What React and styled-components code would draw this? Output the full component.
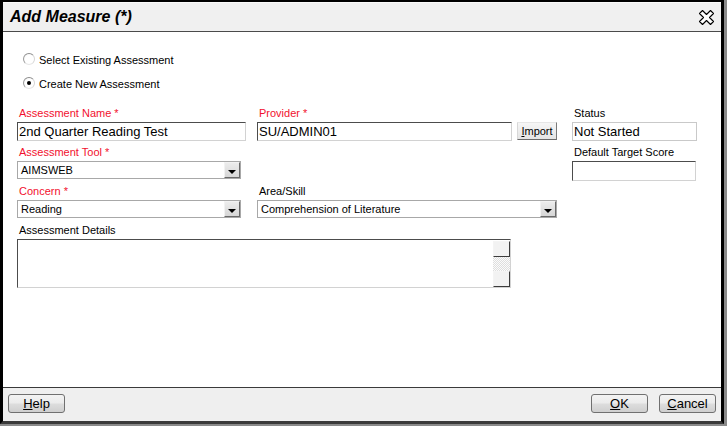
import React from 'react'
import styled, { createGlobalStyle } from 'styled-components'

const GlobalStyle = createGlobalStyle`
  html, body {
    margin: 0;
    padding: 0;
    background: #8a8a8a;
    width: 727px;
    height: 426px;
    overflow: hidden;
  }
  body {
    font-family: "Liberation Sans", Arial, sans-serif;
    color: #000;
  }
`

const Dialog = styled.div`
  width: 724px;
  height: 424px;
  box-sizing: border-box;
  border: 3px solid #000;
  border-bottom-color: #3a3a3a;
  display: flex;
  flex-direction: column;
  background: #fff;
`

const TitleBar = styled.div`
  height: 28px;
  display: flex;
  align-items: center;
  justify-content: space-between;
  padding: 0 6px 0 7px;
  background: #f0f0f0;
  border-top: 1px solid #fafafa;
  border-bottom: 1px solid #4a4a4a;
  box-sizing: content-box;
  margin-top: -1px;
`

const Title = styled.h1`
  margin: 0;
  font-size: 16px;
  font-weight: bold;
  font-style: italic;
  letter-spacing: 0;
`

const Body = styled.div`
  flex: 1;
  padding: 16px 0 0 14px;
`

const RadioRow = styled.label`
  height: 24px;
  display: flex;
  align-items: center;
  gap: 4px;
  padding-left: 6px;
  font-size: 11px;
`

const RadioDot = styled.span`
  width: 10px;
  height: 10px;
  border-radius: 50%;
  border: 1px solid;
  border-color: #8c8c8c #d6d6d6 #e6e6e6 #9c9c9c;
  background: radial-gradient(circle at 60% 60%, #fff 0 55%, #ececec 100%);
  display: flex;
  align-items: center;
  justify-content: center;
  margin-top: -3px;

  &::after {
    content: '';
    width: 4px;
    height: 4px;
    border-radius: 50%;
    background: ${({ checked }) => (checked ? '#000' : 'transparent')};
  }
`

const FormGrid = styled.div`
  margin-top: 11px;
  display: grid;
  grid-template-columns: 240px 315px 125px;
  grid-template-rows: 39px 39px 39px auto;
`

const Field = styled.div`
  display: flex;
  flex-direction: column;
  align-items: flex-start;
  grid-column: ${({ span }) => span || 'auto'};
`

const Label = styled.div`
  font-size: 11px;
  line-height: 13px;
  height: 13px;
  margin-bottom: 2px;
  padding-left: 2px;
  color: ${({ required }) => (required ? '#f2102e' : '#000')};
  white-space: nowrap;
`

const TextBox = styled.div`
  width: ${({ w }) => w}px;
  height: ${({ h }) => h || 19}px;
  box-sizing: border-box;
  border: 1px solid;
  border-color: ${({ flat }) =>
    flat ? '#c9c9c9' : '#4c4c4c #d2d2d2 #d2d2d2 #4c4c4c'};
  background: #fff;
  font-size: 13px;
  line-height: 17px;
  padding-left: 1px;
  white-space: nowrap;
  overflow: hidden;
`

const InlineRow = styled.div`
  display: flex;
  align-items: flex-start;
  gap: 5px;
`

const SmallButton = styled.div`
  width: 40px;
  height: 18px;
  box-sizing: border-box;
  border: 1px solid;
  border-color: #e6e6e6 #7a7a7a #6a6a6a #d8d8d8;
  background: linear-gradient(#f6f6f6, #e4e4e4);
  font-size: 11px;
  display: flex;
  align-items: center;
  justify-content: center;
`

const SelectBox = styled.div`
  width: ${({ w }) => w}px;
  height: 18px;
  box-sizing: border-box;
  border: 1px solid #a8a8a8;
  background: #fff;
  display: flex;
  align-items: stretch;
  font-size: 11px;
`

const SelectText = styled.div`
  flex: 1;
  padding-left: 3px;
  line-height: 16px;
`

const SelectArrow = styled.div`
  width: 16px;
  box-sizing: border-box;
  border: 1px solid;
  border-color: #f2f2f2 #6a6a6a #6a6a6a #f2f2f2;
  background: linear-gradient(#ececec, #d6d6d6);
  display: flex;
  align-items: center;
  justify-content: center;

  &::after {
    content: '';
    margin-top: 3px;
    border-left: 4px solid transparent;
    border-right: 4px solid transparent;
    border-top: 4px solid #000;
  }
`

const TextArea = styled.div`
  width: 494px;
  height: 49px;
  box-sizing: border-box;
  border: 1px solid;
  border-color: #4c4c4c #d2d2d2 #d2d2d2 #4c4c4c;
  display: flex;
  justify-content: flex-end;
`

const ScrollBar = styled.div`
  width: 17px;
  display: flex;
  flex-direction: column;
  padding-top: 1px;
`

const ScrollButton = styled.div`
  height: 16px;
  box-sizing: border-box;
  border: 1px solid;
  border-color: #f4f4f4 #3c3c3c #3c3c3c #f4f4f4;
  background: #f2f2f2;
`

const ScrollTrack = styled.div`
  flex: 1;
  background: repeating-conic-gradient(#dedede 0 25%, #fbfbfb 0 50%) 0 0 / 2px 2px;
`

const Footer = styled.div`
  height: 34px;
  border-top: 1px solid #3a3a3a;
  background: #efefef;
  display: flex;
  justify-content: space-between;
  align-items: flex-start;
  padding: 6px 5px 0 5px;
  box-sizing: border-box;
`

const ButtonGroup = styled.div`
  display: flex;
  gap: 11px;
`

const DialogButton = styled.div`
  width: 57px;
  height: 19px;
  box-sizing: border-box;
  border: 1px solid #707070;
  border-radius: 3px;
  background: linear-gradient(#f3f3f3 0%, #ebebeb 48%, #dddddd 52%, #cfcfcf 100%);
  font-size: 13px;
  display: flex;
  align-items: center;
  justify-content: center;
`

const CloseIcon = () => (
  <svg width="17" height="17" viewBox="0 0 17 17">
    <path
      d="M1.5 4.5 L4.5 1.5 L8.5 5.5 L12.5 1.5 L15.5 4.5 L11.5 8.5 L15.5 12.5 L12.5 15.5 L8.5 11.5 L4.5 15.5 L1.5 12.5 L5.5 8.5 Z"
      fill="#fff"
      stroke="#000"
      strokeWidth="1.1"
      strokeLinejoin="round"
    />
  </svg>
)

function Select({ width, value }) {
  return (
    <SelectBox w={width}>
      <SelectText>{value}</SelectText>
      <SelectArrow />
    </SelectBox>
  )
}

export default function App() {
  return (
    <>
      <GlobalStyle />
      <Dialog>
        <TitleBar>
          <Title>Add Measure (*)</Title>
          <CloseIcon />
        </TitleBar>
        <Body>
          <RadioRow>
            <RadioDot />
            Select Existing Assessment
          </RadioRow>
          <RadioRow>
            <RadioDot checked />
            Create New Assessment
          </RadioRow>

          <FormGrid>
            <Field>
              <Label required>Assessment Name *</Label>
              <TextBox w={229}>2nd Quarter Reading Test</TextBox>
            </Field>
            <Field>
              <Label required>Provider *</Label>
              <InlineRow>
                <TextBox w={255}>SU/ADMIN01</TextBox>
                <SmallButton>
                  <u>I</u>mport
                </SmallButton>
              </InlineRow>
            </Field>
            <Field>
              <Label>Status</Label>
              <TextBox w={125} flat>Not Started</TextBox>
            </Field>

            <Field>
              <Label required>Assessment Tool *</Label>
              <Select width={224} value="AIMSWEB" />
            </Field>
            <Field />
            <Field>
              <Label>Default Target Score</Label>
              <TextBox w={124} h={20} />
            </Field>

            <Field>
              <Label required>Concern *</Label>
              <Select width={224} value="Reading" />
            </Field>
            <Field>
              <Label>Area/Skill</Label>
              <Select width={300} value="Comprehension of Literature" />
            </Field>
            <Field />

            <Field span="1 / span 2">
              <Label>Assessment Details</Label>
              <TextArea>
                <ScrollBar>
                  <ScrollButton />
                  <ScrollTrack />
                  <ScrollButton />
                </ScrollBar>
              </TextArea>
            </Field>
          </FormGrid>
        </Body>
        <Footer>
          <DialogButton>
            <u>H</u>elp
          </DialogButton>
          <ButtonGroup>
            <DialogButton>
              <u>O</u>K
            </DialogButton>
            <DialogButton>
              <u>C</u>ancel
            </DialogButton>
          </ButtonGroup>
        </Footer>
      </Dialog>
    </>
  )
}
